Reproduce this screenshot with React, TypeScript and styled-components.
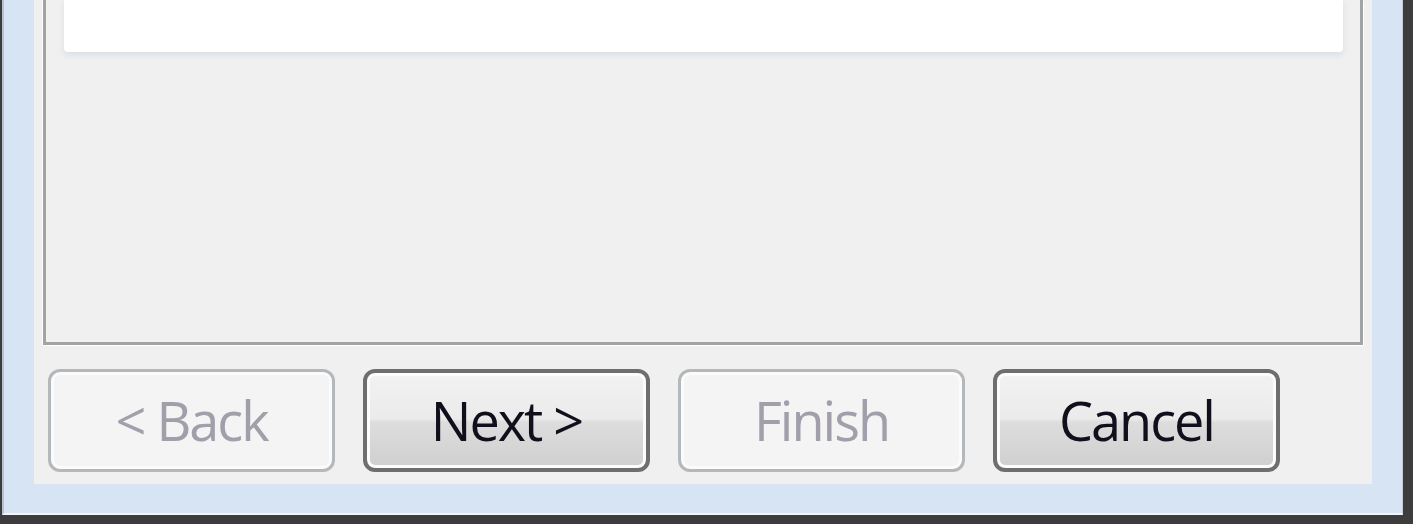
import React from 'react';
import styled, { createGlobalStyle, css } from 'styled-components';

const GlobalStyle = createGlobalStyle`
  html, body {
    margin: 0;
    padding: 0;
    background: #3b3b3b;
  }
  * {
    box-sizing: border-box;
  }
`;

const Window = styled.div`
  width: 1413px;
  height: 524px;
  display: flex;
  padding: 0 10px 9px 2px;
  background: #3d3d3d;
  font-family: 'Open Sans', 'Noto Sans', 'Liberation Sans', sans-serif;
`;

const Frame = styled.div`
  flex: 1;
  display: flex;
  padding: 0 30px 29px 30px;
  background: #d7e4f3;
  border-left: 2px solid #b9c2cc;
  border-right: 1px solid #c4ccd6;
  border-bottom: 2px solid #f2f6fb;
`;

const Client = styled.div`
  flex: 1;
  display: flex;
  flex-direction: column;
  padding: 0 9px 12px 9px;
  background: #f0f0f0;
`;

const Panel = styled.div`
  flex: 1;
  padding: 0 17px 0 18px;
  border: 3px solid #a2a4a4;
  border-top: none;
  box-shadow: 1px 1px 0 #ffffff, -1px 0 0 #ffffff;
  background: #f0f0f0;
`;

const ListBox = styled.div`
  height: 52px;
  background: #ffffff;
  border-radius: 0 0 4px 4px;
  box-shadow: 0 3px 6px rgba(210, 218, 228, 0.8);
`;

const ButtonRow = styled.div`
  display: flex;
  gap: 28px;
  margin-top: 24px;
  padding-left: 5px;
`;

const WizardButton = styled.button<{ $disabled?: boolean }>`
  width: 287px;
  height: 103px;
  padding: 0;
  border-radius: 12px;
  font-family: inherit;
  font-size: 54px;
  font-weight: 500;
  letter-spacing: -2px;
  line-height: 1;
  display: flex;
  align-items: center;
  justify-content: center;
  cursor: default;
  ${({ $disabled }) =>
    $disabled
      ? css`
          border: 3px solid #b5b8ba;
          background: #f4f4f4;
          color: #a29fab;
          box-shadow: inset 0 0 0 3px #fbfbfb;
        `
      : css`
          border: 4px solid #6e6e6e;
          color: #120f1c;
          background: linear-gradient(
            to bottom,
            #f2f2f2 0%,
            #ebebeb 48%,
            #dddddd 52%,
            #cfcfcf 100%
          );
          box-shadow: inset 0 0 0 3px #fcfcfc;
        `}
`;

const Label = styled.span`
  display: block;
  margin-top: -2px;
`;

const buttons = [
  { label: '< Back', disabled: true },
  { label: 'Next >', disabled: false },
  { label: 'Finish', disabled: true },
  { label: 'Cancel', disabled: false },
];

function App(): JSX.Element {
  return (
    <>
      <GlobalStyle />
      <Window>
        <Frame>
          <Client>
            <Panel>
              <ListBox />
            </Panel>
            <ButtonRow>
              {buttons.map((it) => (
                <WizardButton key={it.label} $disabled={it.disabled}>
                  <Label>{it.label}</Label>
                </WizardButton>
              ))}
            </ButtonRow>
          </Client>
        </Frame>
      </Window>
    </>
  );
}

export default App;
